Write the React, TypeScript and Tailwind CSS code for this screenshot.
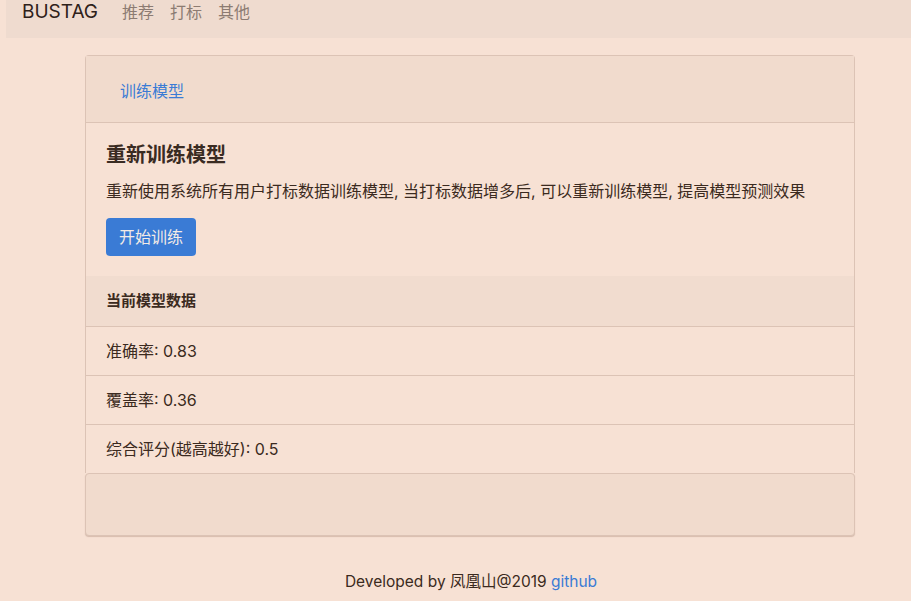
export default function App() {
  const font = { fontFamily: 'Inter, "Noto Sans CJK SC", "Liberation Sans", sans-serif' };
  return (
    <div className="min-h-[601px] w-full bg-[#f7e1d4] text-[#3b2a20]" style={font}>
      <nav className="ml-[6px] flex h-[38px] items-start bg-[#efdbcf] pl-[16px]">
        <span className="mt-[-3px] text-[19px] leading-[30px] text-[#2e211a]">BUSTAG</span>
        <div className="ml-[16px] flex text-[16px] leading-[24px] text-[#8c7b72]">
          <span className="px-[8px]">推荐</span>
          <span className="px-[8px]">打标</span>
          <span className="px-[8px]">其他</span>
        </div>
      </nav>
      <div className="ml-[85px] mt-[17px] w-[770px]">
        <div className="rounded-t-[4px] border border-b-0 border-[#dcc3b5]">
          <div className="flex h-[67px] items-center border-b border-[#dcc3b5] bg-[#f1dbcd] pl-[34px] pt-[4px]">
            <span className="text-[16px] leading-[24px] text-[#3a7bd5]">训练模型</span>
          </div>
          <div className="px-[20px] pt-[20px] pb-[20px]">
            <h5 className="text-[20px] font-bold leading-[24px] text-[#3a2b22]">重新训练模型</h5>
            <p className="mt-[12px] text-[16px] leading-[24px]">重新使用系统所有用户打标数据训练模型, 当打标数据增多后, 可以重新训练模型, 提高模型预测效果</p>
            <button className="mt-[15px] h-[38px] w-[90px] rounded-[4px] bg-[#3a7bd5] text-[16px] leading-[24px] text-[#f3ebe6]">开始训练</button>
          </div>
          <div className="flex h-[50px] items-center bg-[#f1dccf] px-[20px] text-[15px] font-bold">当前模型数据</div>
          <div className="flex h-[49px] items-center border-t border-[#dcc3b5] px-[20px] text-[16px]">准确率: 0.83</div>
          <div className="flex h-[49px] items-center border-t border-[#dcc3b5] px-[20px] text-[16px]">覆盖率: 0.36</div>
          <div className="flex h-[49px] items-center border-t border-[#dcc3b5] px-[20px] text-[16px]">综合评分(越高越好): 0.5</div>
        </div>
        <div className="h-[63px] rounded-[4px] border border-[#dcc3b5] bg-[#f1dbcd] shadow-[0_1px_1px_rgba(120,80,60,0.25)]"></div>
      </div>
      <div className="mt-[34px] pl-[31px] text-center text-[15.5px] leading-[24px]">
        Developed by 凤凰山@2019 <span className="text-[#3a7bd5]">github</span>
      </div>
    </div>
  );
}
